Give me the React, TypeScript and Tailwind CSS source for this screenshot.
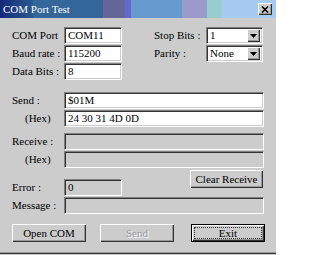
import React from "react";

const FONT = "font-['Liberation_Serif',serif] text-[11px] leading-none text-black";

function Field({
  w,
  value,
  disabled,
}: {
  w: string;
  value?: string;
  disabled?: boolean;
}) {
  return (
    <div
      className={`${w} h-[17px] box-border border border-t-[#808080] border-l-[#808080] border-r-white border-b-white shadow-[inset_1px_1px_0_#333333,inset_-1px_-1px_0_#cccccc] ${
        disabled ? "bg-[#cccccc]" : "bg-white"
      } flex items-center pl-[3px] whitespace-nowrap overflow-hidden`}
    >
      {value}
    </div>
  );
}

function Select({ value }: { value: string }) {
  return (
    <div className="w-[57px] h-[17px] box-border border border-t-[#808080] border-l-[#808080] border-r-white border-b-white shadow-[inset_1px_1px_0_#333333,inset_-1px_-1px_0_#cccccc] bg-white flex items-center pl-[3px] pr-[2px]">
      <span className="flex-1">{value}</span>
      <div className="w-[13px] h-[13px] box-border bg-[#cccccc] shadow-[inset_1px_1px_0_#ffffff,inset_-1px_-1px_0_#333333,inset_-2px_-2px_0_#999999] flex items-center justify-center">
        <svg width="7" height="4" viewBox="0 0 7 4">
          <polygon points="0,0 7,0 3.5,4" fill="#000" />
        </svg>
      </div>
    </div>
  );
}

function Label({ text, className = "" }: { text: string; className?: string }) {
  return <div className={`w-[52px] shrink-0 whitespace-nowrap ${className}`}>{text}</div>;
}

function Button({
  text,
  disabled,
  def,
  w = "w-[74px]",
}: {
  text: string;
  disabled?: boolean;
  def?: boolean;
  w?: string;
}) {
  if (def) {
    return (
      <div className={`${w} h-[18px] box-border border border-black bg-[#cccccc] shadow-[inset_1px_1px_0_#ffffff,inset_-1px_-1px_0_#333333,inset_-2px_-2px_0_#999999] flex p-[2px]`}>
        <div className="flex-1 border border-dotted border-[#333333] flex items-center justify-center">
          {text}
        </div>
      </div>
    );
  }
  return (
    <div
      className={`${w} h-[18px] box-border bg-[#cccccc] shadow-[inset_1px_1px_0_#ffffff,inset_-1px_-1px_0_#333333,inset_-2px_-2px_0_#999999] flex items-center justify-center ${
        disabled ? "text-[#999999] [text-shadow:1px_1px_0_#ffffff]" : ""
      }`}
    >
      {text}
    </div>
  );
}

export default function App() {
  return (
    <div className={`w-[276px] h-[255px] bg-[#cccccc] flex flex-col ${FONT}`}>
      {/* Title bar */}
      <div className="h-[18px] shrink-0 flex items-center pl-[3px] pr-[4px] bg-[linear-gradient(to_right,#14287a_0px,#2c5a8e_33px,#336699_33px,#336699_103px,#666699_103px,#666699_125px,#6666cc_125px,#6666cc_131px,#6699cc_131px,#6699cc_182px,#9999cc_182px,#9999cc_207px,#99cccc_207px,#99cccc_222px,#a6caf0_222px,#a6caf0_276px)]">
        <span className="text-white text-[11px] flex-1">COM Port Test</span>
        <div className="w-[14px] h-[12px] box-border bg-[#cccccc] shadow-[inset_1px_1px_0_#ffffff,inset_-1px_-1px_0_#333333,inset_-2px_-2px_0_#999999] flex items-center justify-center">
          <svg width="8" height="7" viewBox="0 0 8 7">
            <path d="M1 0.5 L7 6.5 M7 0.5 L1 6.5" stroke="#000" strokeWidth="1.6" />
          </svg>
        </div>
      </div>

      {/* Body */}
      <div className="flex-1 flex flex-col pl-[12px] pt-[9px]">
        <div className="flex">
          <div className="flex flex-col gap-[1px]">
            <div className="flex items-center">
              <Label text="COM Port" />
              <Field w="w-[58px]" value="COM11" />
            </div>
            <div className="flex items-center">
              <Label text="Baud rate :" />
              <Field w="w-[58px]" value="115200" />
            </div>
            <div className="flex items-center">
              <Label text="Data Bits :" />
              <Field w="w-[58px]" value="8" />
            </div>
          </div>
          <div className="flex flex-col gap-[1px] ml-[32px]">
            <div className="flex items-center">
              <Label text="Stop Bits :" />
              <Select value="1" />
            </div>
            <div className="flex items-center">
              <Label text="Parity :" />
              <Select value="None" />
            </div>
          </div>
        </div>

        <div className="mt-[12px] flex flex-col">
          <div className="flex items-center">
            <Label text="Send :" />
            <Field w="w-[200px]" value="$01M" />
          </div>
          <div className="flex items-center mt-[1px]">
            <Label text="(Hex)" className="pl-[13px]" />
            <Field w="w-[200px]" value="24 30 31 4D 0D" />
          </div>
          <div className="flex items-center mt-[6px]">
            <Label text="Receive :" />
            <Field w="w-[200px]" disabled />
          </div>
          <div className="flex items-center mt-[1px]">
            <Label text="(Hex)" className="pl-[13px]" />
            <Field w="w-[200px]" disabled />
          </div>
        </div>

        <div className="mt-[2px] flex items-start">
          <div className="flex items-center mt-[9px]">
            <Label text="Error :" />
            <Field w="w-[58px]" value="0" disabled />
          </div>
          <div className="ml-[68px]">
            <Button text="Clear Receive" w="w-[73px]" />
          </div>
        </div>
        <div className="flex items-center mt-[1px]">
          <Label text="Message :" />
          <Field w="w-[200px]" disabled />
        </div>

        <div className="flex mt-[10px]">
          <Button text="Open COM" />
          <div className="ml-[14px]">
            <Button text="Send" disabled />
          </div>
          <div className="ml-[17px]">
            <Button text="Exit" def />
          </div>
        </div>
      </div>

      <div className="h-[1px] bg-[#999999] shrink-0" />
      <div className="h-[1px] bg-[#333333] shrink-0" />
      <div className="h-[1px] bg-[#cccccc] shrink-0" />
    </div>
  );
}
